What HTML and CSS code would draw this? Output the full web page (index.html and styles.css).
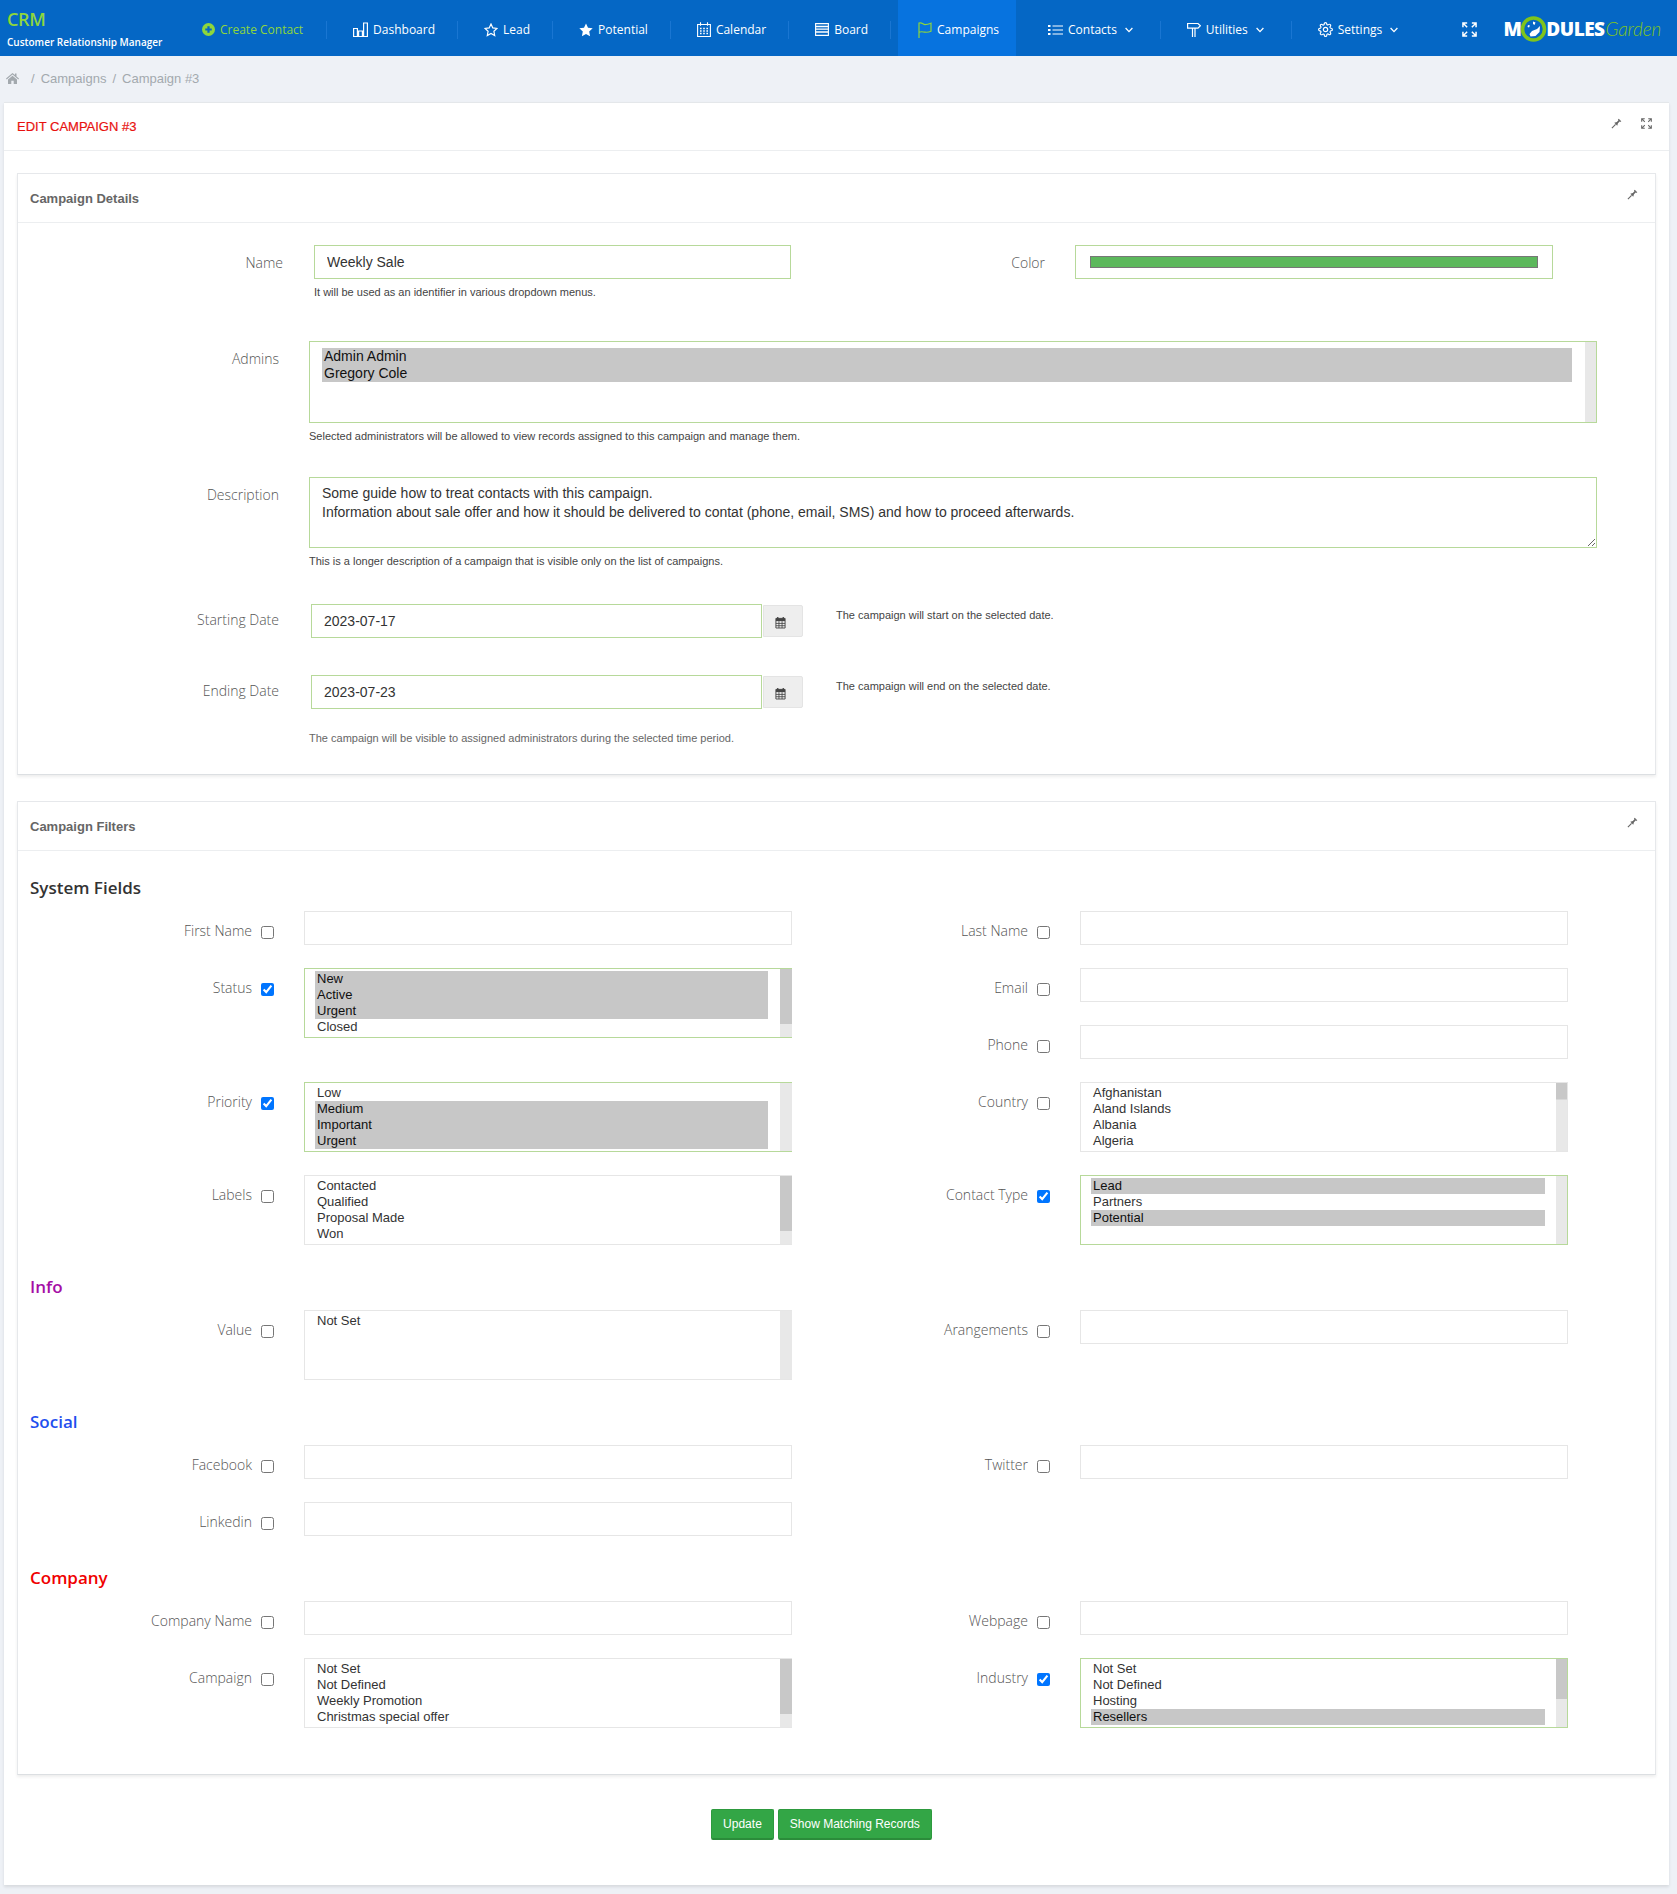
FILE: index.html
```html
<!DOCTYPE html>
<html lang="en">
<head>
<meta charset="utf-8">
<title>Edit Campaign #3</title>
<link rel="stylesheet" href="styles.css">
</head>
<body>
<svg class="sprite" width="0" height="0" aria-hidden="true">
  <symbol id="i-pin" viewBox="0 0 12 12"><path d="M1 11 5 7" stroke="currentColor" stroke-width="1.2" fill="none"/><path d="M3.6 5.2 6.8 8.4 7.6 5.6 10 3.4 8.6 2 6.4 4.4z" fill="currentColor"/><path d="M8 1.2 10.8 4" stroke="currentColor" stroke-width="1.2"/></symbol>
  <symbol id="i-expand" viewBox="0 0 16 16"><path d="M1 5.500V1h4.500M1 1l4.500 4.500M15 5.500V1h-4.500M15 1l-4.500 4.500M1 10.500V15h4.500M1 15l4.500-4.500M15 10.500V15h-4.500M15 15l-4.500-4.500" fill="none" stroke="currentColor" stroke-width="1.600"/></symbol>
  <symbol id="i-cal" viewBox="0 0 12 14"><path d="M1 2.500h10V13H1z" fill="none" stroke="currentColor" stroke-width="1"/><path d="M1 2.500h10v3H1z" fill="currentColor"/><path d="M3 1v2.500M9 1v2.500" stroke="currentColor" stroke-width="1.400"/><path d="M1 8h10M1 10.500h10M4.300 5.500V13M7.700 5.500V13" stroke="currentColor" stroke-width=".9"/></symbol>
</svg>

<header class="topbar">
  <div class="brand">
    <div class="brand-name">CRM</div>
    <div class="brand-sub">Customer Relationship Manager</div>
  </div>
  <nav class="nav">
    <a class="nav-item nav-create">
      <svg class="ni" width="13" height="13" viewBox="0 0 14 14"><circle cx="7" cy="7" r="7" fill="#8ed63c"/><path d="M7 3.500v7M3.500 7h7" stroke="#0567c5" stroke-width="2.400"/></svg>
      <span>Create Contact</span>
    </a>
    <a class="nav-item">
      <svg class="ni" width="15" height="15" viewBox="0 0 15 15" fill="none" stroke="#fff" stroke-width="1.200"><path d="M.6 6.500h3.800v8H.6zM5.600 9h3.800v5.500H5.600zM10.600 1h3.800v13.500h-3.800z"/></svg>
      <span>Dashboard</span>
    </a>
    <a class="nav-item">
      <svg class="ni" width="14" height="14" viewBox="0 0 14 14" fill="none" stroke="#fff" stroke-width="1.200"><path d="M7 1l1.800 3.900 4.200.5-3.100 2.900.8 4.200L7 10.400 3.300 12.500l.8-4.200L1 5.400l4.200-.5z"/></svg>
      <span>Lead</span>
    </a>
    <a class="nav-item">
      <svg class="ni" width="14" height="14" viewBox="0 0 14 14" fill="#fff"><path d="M7 .4l2 4.300 4.700.6-3.500 3.200.9 4.700L7 10.900 2.900 13.200l.9-4.700L.3 5.300 5 4.700z"/></svg>
      <span>Potential</span>
    </a>
    <a class="nav-item">
      <svg class="ni" width="14" height="15" viewBox="0 0 14 15" fill="none" stroke="#fff" stroke-width="1.100"><path d="M.6 2.500h12.800v12H.6z"/><path d="M3.500.3v3.400M10.500.3v3.400"/><path d="M3 6.500h1.600M6.200 6.500h1.600M9.400 6.500H11M3 9h1.600M6.200 9h1.600M9.400 9H11M3 11.500h1.600M6.200 11.500h1.600M9.400 11.500H11" stroke-width="1.500"/></svg>
      <span>Calendar</span>
    </a>
    <a class="nav-item">
      <svg class="ni" width="14" height="13" viewBox="0 0 14 13" fill="none" stroke="#fff" stroke-width="1.100"><path d="M.6.600h12.800v11.800H.6z"/><path d="M.6 3.500h12.800M.6 6.200h12.800M.6 9h12.800" stroke-width="1.300"/></svg>
      <span>Board</span>
    </a>
    <a class="nav-item nav-active">
      <svg class="ni" width="14" height="16" viewBox="0 0 14 16" fill="none" stroke="#8ed63c" stroke-width="1.200"><path d="M1 16V1c3-1 4 1.600 6 1.600 2 0 4-.6 6-1.400v8c-2 1-4 1.200-6 1-2-.2-3.500-1-6 0"/></svg>
      <span>Campaigns</span>
    </a>
    <a class="nav-item nav-drop">
      <svg class="ni" width="15" height="12" viewBox="0 0 15 12" fill="none" stroke="#fff"><path d="M0 2h2.500M0 6h2.500M0 10h2.500" stroke-width="2"/><path d="M4.500 2H15M4.500 6H15M4.500 10H15" stroke-width="1.200"/></svg>
      <span>Contacts</span>
      <svg class="chev" width="8" height="6" viewBox="0 0 8 6" fill="none" stroke="#fff" stroke-width="1.300"><path d="M.6 1l3.400 3.600L7.400 1"/></svg>
    </a>
    <a class="nav-item nav-drop">
      <svg class="ni" width="14" height="15" viewBox="0 0 14 15" fill="none" stroke="#fff" stroke-width="1.200"><path d="M.6 1.500h10.400l2.400 2.300-2.400 2.300H.6z"/><path d="M5.500 6.100V15M8 6.100V15"/></svg>
      <span>Utilities</span>
      <svg class="chev" width="8" height="6" viewBox="0 0 8 6" fill="none" stroke="#fff" stroke-width="1.300"><path d="M.6 1l3.400 3.600L7.400 1"/></svg>
    </a>
    <a class="nav-item nav-drop nav-last">
      <svg class="ni" width="15" height="15" viewBox="0 0 24 24" fill="none" stroke="#fff" stroke-width="1.900"><circle cx="12" cy="12" r="3.500"/><path d="M19.400 15a1.650 1.650 0 0 0 .33 1.820l.06.06a2 2 0 0 1 0 2.830 2 2 0 0 1-2.830 0l-.06-.06a1.650 1.650 0 0 0-1.820-.33 1.650 1.650 0 0 0-1 1.510V21a2 2 0 0 1-2 2 2 2 0 0 1-2-2v-.09A1.650 1.650 0 0 0 9 19.400a1.650 1.650 0 0 0-1.820.33l-.06.06a2 2 0 0 1-2.830 0 2 2 0 0 1 0-2.830l.06-.06a1.650 1.650 0 0 0 .33-1.820 1.650 1.650 0 0 0-1.510-1H3a2 2 0 0 1-2-2 2 2 0 0 1 2-2h.09A1.650 1.650 0 0 0 4.600 9a1.650 1.650 0 0 0-.33-1.820l-.06-.06a2 2 0 0 1 0-2.830 2 2 0 0 1 2.830 0l.06.06a1.650 1.650 0 0 0 1.820.33H9a1.650 1.650 0 0 0 1-1.510V3a2 2 0 0 1 2-2 2 2 0 0 1 2 2v.09a1.650 1.650 0 0 0 1 1.510 1.650 1.650 0 0 0 1.820-.33l.06-.06a2 2 0 0 1 2.830 0 2 2 0 0 1 0 2.830l-.06.06a1.650 1.650 0 0 0-.33 1.820V9a1.650 1.650 0 0 0 1.510 1H21a2 2 0 0 1 2 2 2 2 0 0 1-2 2h-.09a1.650 1.650 0 0 0-1.510 1z"/></svg>
      <span>Settings</span>
      <svg class="chev" width="8" height="6" viewBox="0 0 8 6" fill="none" stroke="#fff" stroke-width="1.300"><path d="M.6 1l3.400 3.600L7.400 1"/></svg>
    </a>
  </nav>
  <div class="topbar-right">
    <svg class="top-expand" width="15" height="15"><use href="#i-expand"/></svg>
    <div class="logo">
      <span class="logo-bold">M</span>
      <svg class="logo-o" width="27" height="26" viewBox="0 0 27 26"><circle cx="13.500" cy="13" r="11" fill="#0567c5" stroke="#7fc41c" stroke-width="3.600"/><path d="M13 5.500l2.500 1-1 2.500-1.500-1zM20 10l-3 3-5 2-2.500 3 1 2.500 5-.5 4-4zM8 9l2 .5-1 2-1.500-.5z" fill="#fff"/></svg>
      <span class="logo-bold">DULES</span><span class="logo-light">Garden</span>
    </div>
  </div>
</header>

<div class="crumbs">
  <svg class="home" width="13" height="11" viewBox="0 0 13 11" fill="#a3a9ae"><path d="M6.500 0 0 5.600l.7.800L6.500 1.500l5.800 4.900.7-.8L10.500 3.400V.6H9v1.500zM2 6.600V11h3.300V7.700h2.400V11H11V6.600L6.500 2.800z"/></svg>
  <span class="sep">/</span><span>Campaigns</span><span class="sep sep-tight">/</span><span>Campaign #3</span>
</div>

<main class="panel">
  <div class="panel-head">
    <h1 class="panel-title">EDIT CAMPAIGN #3</h1>
    <div class="tools">
      <svg width="11" height="11"><use href="#i-pin"/></svg>
      <svg width="11" height="11"><use href="#i-expand"/></svg>
    </div>
  </div>
  <div class="panel-body">

    <section class="card">
      <div class="card-head">
        <h2 class="card-title">Campaign Details</h2>
        <div class="tools"><svg width="11" height="11"><use href="#i-pin"/></svg></div>
      </div>
      <div class="details">
        <div class="d-row d-name">
          <label class="d-label d-label-name">Name</label>
          <div class="d-control">
            <input class="input is-set w-name" type="text" value="Weekly Sale">
            <p class="help">It will be used as an identifier in various dropdown menus.</p>
          </div>
          <label class="d-label d-label-color">Color</label>
          <input class="color" type="color" value="#5cb85c">
        </div>
        <div class="d-row d-admins">
          <label class="d-label">Admins</label>
          <div class="d-control d-wide">
            <select class="list list-admins is-set" multiple size="4">
              <option selected>Admin Admin</option>
              <option selected>Gregory Cole</option>
            </select>
            <p class="help">Selected administrators will be allowed to view records assigned to this campaign and manage them.</p>
          </div>
        </div>
        <div class="d-row d-desc">
          <label class="d-label">Description</label>
          <div class="d-control d-wide">
            <textarea class="textarea is-set">Some guide how to treat contacts with this campaign.
Information about sale offer and how it should be delivered to contat (phone, email, SMS) and how to proceed afterwards.</textarea>
            <p class="help">This is a longer description of a campaign that is visible only on the list of campaigns.</p>
          </div>
        </div>
        <div class="d-row d-date">
          <label class="d-label">Starting Date</label>
          <input class="input is-set date-input" type="text" value="2023-07-17">
          <span class="addon"><svg width="11" height="13"><use href="#i-cal"/></svg></span>
          <p class="help help-side">The campaign will start on the selected date.</p>
        </div>
        <div class="d-row d-date d-date-end">
          <label class="d-label">Ending Date</label>
          <input class="input is-set date-input" type="text" value="2023-07-23">
          <span class="addon"><svg width="11" height="13"><use href="#i-cal"/></svg></span>
          <p class="help help-side">The campaign will end on the selected date.</p>
        </div>
        <p class="help help-final">The campaign will be visible to assigned administrators during the selected time period.</p>
      </div>
    </section>

    <section class="card card-filters">
      <div class="card-head">
        <h2 class="card-title">Campaign Filters</h2>
        <div class="tools"><svg width="11" height="11"><use href="#i-pin"/></svg></div>
      </div>
      <div class="filters">
        <h3 class="group group-system">System Fields</h3>
        <div class="f-grid f-grid-system">
          <div class="field"><label class="f-label">First Name</label><input class="check" type="checkbox"><input class="input" type="text"></div>
          <div class="field"><label class="f-label">Last Name</label><input class="check" type="checkbox"><input class="input" type="text"></div>
          <div class="field f-span2 f-left"><label class="f-label">Status</label><input class="check" type="checkbox" checked>
            <select class="list thumb-80 is-set" multiple size="4"><option selected>New</option><option selected>Active</option><option selected>Urgent</option><option>Closed</option><option>Lost</option></select></div>
          <div class="field"><label class="f-label">Email</label><input class="check" type="checkbox"><input class="input" type="text"></div>
          <div class="field f-right"><label class="f-label">Phone</label><input class="check" type="checkbox"><input class="input" type="text"></div>
          <div class="field f-left"><label class="f-label">Priority</label><input class="check" type="checkbox" checked>
            <select class="list is-set" multiple size="4"><option>Low</option><option selected>Medium</option><option selected>Important</option><option selected>Urgent</option></select></div>
          <div class="field"><label class="f-label">Country</label><input class="check" type="checkbox">
            <select class="list thumb-25" multiple size="4"><option>Afghanistan</option><option>Aland Islands</option><option>Albania</option><option>Algeria</option><option>American Samoa</option><option>Andorra</option><option>Angola</option><option>Anguilla</option><option>Antarctica</option><option>Argentina</option><option>Armenia</option><option>Aruba</option><option>Australia</option><option>Austria</option><option>Azerbaijan</option><option>Bahamas</option></select></div>
          <div class="field f-left"><label class="f-label">Labels</label><input class="check" type="checkbox">
            <select class="list thumb-80" multiple size="4"><option>Contacted</option><option>Qualified</option><option>Proposal Made</option><option>Won</option><option>Lost</option></select></div>
          <div class="field"><label class="f-label">Contact Type</label><input class="check" type="checkbox" checked>
            <select class="list is-set" multiple size="4"><option selected>Lead</option><option>Partners</option><option selected>Potential</option></select></div>
        </div>

        <h3 class="group group-info">Info</h3>
        <div class="f-grid">
          <div class="field f-left"><label class="f-label">Value</label><input class="check" type="checkbox">
            <select class="list" multiple size="4"><option>Not Set</option></select></div>
          <div class="field"><label class="f-label">Arangements</label><input class="check" type="checkbox"><input class="input" type="text"></div>
        </div>

        <h3 class="group group-social">Social</h3>
        <div class="f-grid">
          <div class="field"><label class="f-label">Facebook</label><input class="check" type="checkbox"><input class="input" type="text"></div>
          <div class="field"><label class="f-label">Twitter</label><input class="check" type="checkbox"><input class="input" type="text"></div>
          <div class="field"><label class="f-label">Linkedin</label><input class="check" type="checkbox"><input class="input" type="text"></div>
        </div>

        <h3 class="group group-company">Company</h3>
        <div class="f-grid">
          <div class="field"><label class="f-label">Company Name</label><input class="check" type="checkbox"><input class="input" type="text"></div>
          <div class="field"><label class="f-label">Webpage</label><input class="check" type="checkbox"><input class="input" type="text"></div>
          <div class="field f-left"><label class="f-label">Campaign</label><input class="check" type="checkbox">
            <select class="list thumb-80" multiple size="4"><option>Not Set</option><option>Not Defined</option><option>Weekly Promotion</option><option>Christmas special offer</option><option>Summer Sale</option></select></div>
          <div class="field"><label class="f-label">Industry</label><input class="check" type="checkbox" checked>
            <select class="list thumb-60 is-set" multiple size="4"><option>Not Set</option><option>Not Defined</option><option>Hosting</option><option selected>Resellers</option><option>Retail</option><option>Software</option><option>Finance</option></select></div>
        </div>
      </div>
    </section>

    <div class="actions">
      <button class="btn" type="button">Update</button>
      <button class="btn" type="button">Show Matching Records</button>
    </div>
  </div>
</main>
</body>
</html>
```

FILE: styles.css
```css
* { box-sizing: border-box; }
html, body { margin: 0; padding: 0; }
body {
  background: #eef1f6;
  font-family: "Liberation Sans", Arial, sans-serif;
  font-size: 14px;
  color: #333;
  height: 1894px;
  overflow: hidden;
}
.sprite { position: absolute; }
h1, h2, h3, p { margin: 0; }

/* top bar */
.topbar {
  display: flex;
  height: 56px;
  background: #0567c5;
  color: #fff;
  font-family: "Open Sans", sans-serif;
}
.brand { width: 176px; padding: 7px 0 0 7px; flex: none; }
.brand-name { font-size: 18px; font-weight: 600; line-height: 24px; color: #8ed63c; letter-spacing: -0.3px; }
.brand-sub { font-size: 10px; font-weight: 600; line-height: 14px; margin-top: 4px; white-space: nowrap; }
.nav { display: flex; align-items: center; height: 56px; }
.nav-item {
  position: relative;
  display: flex;
  align-items: center;
  height: 56px;
  padding: 3px 23px 0 26px;
  font-size: 12px;
  line-height: 16px;
  white-space: nowrap;
}
.nav-item::after {
  content: "";
  position: absolute;
  right: 0;
  top: 21px;
  height: 18px;
  width: 1px;
  background: #1a76d2;
}
.nav-item .ni { margin-right: 5px; flex: none; }
.nav-create { color: #8ed63c; padding-right: 24px; }
.nav-active { background: #0773df; padding: 3px 17px 0 20px; margin: 0 6px 0 7px; }
.nav-active::after { display: none; }
.nav-drop { padding-right: 28px; }
.nav-last::after { display: none; }
.chev { margin-left: 8px; flex: none; }
.topbar-right { margin-left: auto; display: flex; align-items: center; padding-right: 16px; }
.top-expand { color: #fff; margin: 3px 26px 0 0; }
.logo { display: flex; align-items: center; height: 28px; margin-top: 1px; }
.logo-bold { font-weight: 800; font-size: 19px; letter-spacing: -0.5px; color: #fff; line-height: 28px; }
.logo-light { font-family: "Lato", sans-serif; font-style: italic; font-weight: 300; font-size: 19px; color: #7fc41c; margin-left: 1px; line-height: 28px; letter-spacing: -0.2px; }
.logo-o { margin: 0 -1px; flex: none; }

/* breadcrumb */
.crumbs {
  display: flex;
  align-items: center;
  height: 45px;
  padding: 0 0 0 6px;
  color: #a3a9ae;
  font-size: 13px;
}
.sep { margin: 0 6px 0 12px; color: #a3a9ae; }
.sep-tight { margin: 0 6px; }

/* panels */
.panel {
  margin: 1px 8px 0 4px;
  height: 1783px;
  background: #fff;
  border-top: 1px solid #e4e7ea;
  box-shadow: 0 2px 3px rgba(0,0,0,.1);
}
.panel-head {
  display: flex;
  align-items: center;
  justify-content: space-between;
  height: 48px;
  padding: 0 17px 0 13px;
  border-bottom: 1px solid #eceef0;
}
.panel-title { font-size: 13px; font-weight: 400; color: #e8110f; -webkit-text-stroke: .2px #e8110f; }
.tools { display: flex; gap: 19px; color: #666; margin-bottom: 7px; }
.panel-body { padding: 22px 13px 0; }
.card {
  background: #fff;
  border: 1px solid #e6e8eb;
  border-bottom-color: #dcdfe2;
  box-shadow: 0 2px 3px rgba(0,0,0,.07);
}
.card-filters { margin-top: 26px; }
.card-head {
  display: flex;
  align-items: center;
  justify-content: space-between;
  height: 49px;
  padding: 0 17px 0 12px;
  border-bottom: 1px solid #eceef0;
}
.card-title { font-size: 13px; font-weight: 700; color: #666; padding-top: 1px; }

/* form controls */
.input, .textarea, .list, .color {
  border: 1px solid #e6e6e6;
  background-color: #fff;
  border-radius: 0;
  outline: none;
}
.input {
  height: 34px;
  width: 488px;
  padding: 0 12px;
  font: 14px "Liberation Sans", Arial, sans-serif;
  color: #333;
}
.is-set { border-color: #b7d99a; }
.help { font-size: 11px; line-height: 16px; color: #444; margin-top: 5px; white-space: nowrap; }
.d-label, .f-label {
  font-family: "Open Sans", sans-serif;
  font-weight: 300;
  font-size: 14px;
  line-height: 20px;
  color: #555;
  text-align: right;
  white-space: nowrap;
}

/* details */
.details { padding: 22px 0 29px 12px; height: 551px; }
.d-row { display: flex; align-items: flex-start; }
.d-label { width: 249px; margin-right: 30px; padding-top: 8px; flex: none; }
.d-wide { width: 1288px; flex: none; }
.d-name { height: 96px; }
.d-label-name { width: 253px; margin-right: 31px; }
.d-label-color { width: 254px; margin-right: 30px; }
.w-name { width: 477px; }
.color {
  width: 478px;
  height: 34px;
  padding: 10px 14px;
  appearance: none;
  -webkit-appearance: none;
  border-color: #b7d99a;
}
.color::-webkit-color-swatch-wrapper { padding: 0; }
.color::-webkit-color-swatch { border: 1px solid #777; border-radius: 0; }
.d-admins { height: 136px; }
.d-desc { height: 127px; }
.d-date { height: 71px; }
.d-date .d-label { margin-right: 32px; padding-top: 6px; }
.d-date-end { height: 55px; }
.date-input { width: 451px; }
.addon {
  display: flex;
  align-items: center;
  padding: 2px 0 0 11px;
  width: 40px;
  height: 32px;
  margin: 1px 0 0 1px;
  background: #eeeeee;
  border: 1px solid #e4e4e4;
  border-radius: 0 2px 2px 0;
  color: #444;
}
.help-side { margin: 3px 0 0 33px; }
.help-final { margin: 0 0 0 279px; color: #666; }
.textarea {
  display: block;
  width: 100%;
  height: 71px;
  padding: 6px 12px;
  font: 14px/19px "Liberation Sans", Arial, sans-serif;
  color: #333;
  resize: vertical;
}

/* listboxes: the browser hides native scrollbars, so the track and thumb are painted on the box */
.list {
  --thumb: 0%;
  display: block;
  width: 488px;
  height: 70px;
  padding: 2px 22px 2px 10px;
  font: 13px "Liberation Sans", Arial, sans-serif;
  color: #333;
  background-image: linear-gradient(#c8c8c8, #c8c8c8), linear-gradient(#e8e8e8, #e8e8e8);
  background-repeat: no-repeat;
  background-position: right top, right top;
  background-size: 12px var(--thumb), 12px 100%;
  background-origin: border-box;
}
.thumb-80 { --thumb: 80%; }
.thumb-60 { --thumb: 59%; }
.thumb-25 { --thumb: 25%; }
.list option { min-height: 16px; }
.list option:checked { background: #c7c7c7 linear-gradient(#c7c7c7, #c7c7c7); }
.list-admins { width: 100%; height: 82px; padding: 6px 24px 6px 12px; font-size: 14px; }

/* filters */
.filters { padding: 25px 0 46px 12px; }
.group { font-family: "Open Sans", sans-serif; font-size: 17px; font-weight: 600; line-height: 24px; margin: 30px 0 11px; }
.group-system { color: #333; margin-top: 0; }
.group-info { color: #a50ea5; }
.group-social { color: #1f4fee; }
.group-company { color: #f00000; }
.f-grid { display: grid; grid-template-columns: 776px 776px; row-gap: 23px; }
.f-grid-system { grid-template-rows: 34px 34px 34px 70px 70px; }
.f-span2 { grid-row: span 2; }
.f-right { grid-column: 2; }
.field { display: flex; align-items: flex-start; }
.f-label { width: 222px; flex: none; padding-top: 10px; }
.f-left .list { border-right: 0; padding-right: 24px; }
.check { width: 13px; height: 13px; margin: 15px 30px 0 9px; flex: none; }

/* actions */
.actions { display: flex; justify-content: center; gap: 4px; margin: 34px 30px 0 0; }
.btn {
  height: 31px;
  padding: 0 11px;
  background: #33a646;
  color: #fff;
  border: 1px solid #2d9a3e;
  border-bottom: 2px solid #2b8c3a;
  border-radius: 2px;
  font: 12px "Liberation Sans", Arial, sans-serif;
}
```
